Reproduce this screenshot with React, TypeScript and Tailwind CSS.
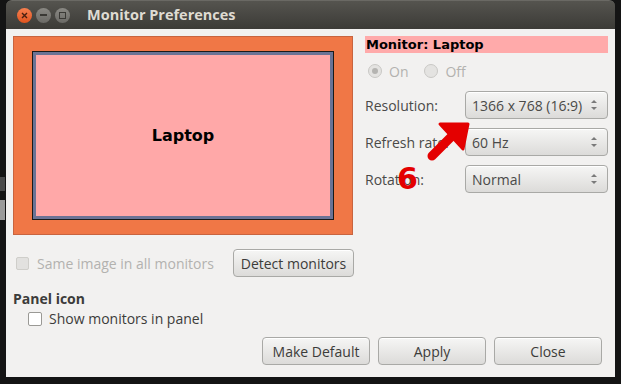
import React from 'react'

const font = { fontFamily: '"Open Sans", "DejaVu Sans", sans-serif' }

function Spinner() {
  return (
    <svg width="8" height="14" viewBox="0 0 8 14" className="shrink-0">
      <path d="M1 5 L4 2 L7 5 Z" fill="#7a7a7a" />
      <path d="M1 9 L4 12 L7 9 Z" fill="#7a7a7a" />
    </svg>
  )
}

function Combo({ value }: { value: string }) {
  return (
    <div className="h-[28px] w-[143px] flex items-center justify-between pl-[6px] pr-[9px] rounded-[4px] border border-[#a9a9a6] bg-gradient-to-b from-[#f6f6f5] to-[#dcdbd9] text-[14px] text-[#4a4a48] shadow-[inset_0_1px_0_#fff]">
      <span>{value}</span>
      <Spinner />
    </div>
  )
}

function Button({ label, className = '' }: { label: string; className?: string }) {
  return (
    <div
      className={`h-[28px] flex items-center justify-center rounded-[4px] border border-[#a9a9a6] bg-gradient-to-b from-[#f6f6f5] to-[#dcdbd9] text-[14px] text-[#3c3c3a] shadow-[inset_0_1px_0_#fff] ${className}`}
    >
      {label}
    </div>
  )
}

function Radio({ checked }: { checked?: boolean }) {
  return (
    <div className="w-[14px] h-[14px] rounded-full border border-[#c9c8c5] bg-[#e4e3e1] flex items-center justify-center">
      {checked && <div className="w-[6px] h-[6px] rounded-full bg-[#b5b4b1]" />}
    </div>
  )
}

export default function App() {
  return (
    <div className="w-[621px] h-[384px] bg-[#141414] relative overflow-hidden" style={font}>
      {/* desktop bits peeking out on the left */}
      <div className="absolute left-0 top-[177px] w-[5px] h-[14px] bg-[#4a4a4a]" />
      <div className="absolute left-0 top-[200px] w-[5px] h-[20px] bg-[#9a9a9a]" />

      <div className="ml-[6px] w-[609px] h-[377px] flex flex-col">
        {/* Title bar */}
        <div className="h-[29px] rounded-t-[6px] bg-gradient-to-b from-[#55544f] to-[#3c3b37] border-t border-[#6a6964] flex items-center pl-[11px]">
          <div className="flex items-center gap-[4px]">
            <div className="w-[15px] h-[15px] rounded-full bg-gradient-to-b from-[#f7804f] to-[#e0531c] flex items-center justify-center">
              <svg width="7" height="7" viewBox="0 0 7 7">
                <path d="M1 1 L6 6 M6 1 L1 6" stroke="#4a2010" strokeWidth="1.4" />
              </svg>
            </div>
            <div className="w-[15px] h-[15px] rounded-full bg-gradient-to-b from-[#8a8984] to-[#6b6a66] flex items-center justify-center">
              <div className="w-[7px] h-[1.5px] bg-[#3a3935]" />
            </div>
            <div className="w-[15px] h-[15px] rounded-full bg-gradient-to-b from-[#8a8984] to-[#6b6a66] flex items-center justify-center">
              <div className="w-[7px] h-[7px] border border-[#3a3935]" />
            </div>
          </div>
          <span className="ml-[17px] text-[14.5px] font-bold text-[#dfdbd2]">Monitor Preferences</span>
        </div>

        {/* Content */}
        <div className="flex-1 bg-[#f2f1f0] pl-[7px] pt-[7px] relative">
          <div className="flex gap-[12px]">
            {/* Display arrangement */}
            <div className="w-[340px] h-[199px] bg-[#f07746] border border-[#c8643f] flex items-center justify-center">
              <div className="w-[302px] h-[169px] border border-[#1a1a1a] bg-[#6b7395] p-[3px]">
                <div className="w-full h-full bg-[#ffa8a8] flex items-center justify-center">
                  <span className="text-[16px] font-bold text-black" style={{ fontFamily: '"DejaVu Sans", sans-serif' }}>
                    Laptop
                  </span>
                </div>
              </div>
            </div>

            {/* Monitor settings */}
            <div className="w-[243px] flex flex-col text-[14px] text-[#4a4a48]">
              <div className="h-[17px] bg-[#ffaaaa] flex items-center pl-[1px] text-[13px] font-bold text-black" style={{ fontFamily: '"DejaVu Sans", sans-serif' }}>
                Monitor: Laptop
              </div>
              <div className="h-[36px] flex items-center pl-[3px] text-[#b3b2af]">
                <Radio checked />
                <span className="ml-[7px]">On</span>
                <div className="ml-[16px]">
                  <Radio />
                </div>
                <span className="ml-[7px]">Off</span>
              </div>
              <div className="mt-[2px] flex flex-col gap-[9px]">
                <div className="flex items-center justify-between">
                  <span>Resolution:</span>
                  <Combo value="1366 x 768 (16:9)" />
                </div>
                <div className="flex items-center justify-between">
                  <span>Refresh rate:</span>
                  <Combo value="60 Hz" />
                </div>
                <div className="flex items-center justify-between">
                  <span>Rotation:</span>
                  <Combo value="Normal" />
                </div>
              </div>
            </div>
          </div>

          {/* Same image / detect */}
          <div className="mt-[14px] w-[340px] flex items-center justify-between">
            <div className="flex items-center pl-[3px]">
              <div className="w-[13px] h-[13px] rounded-[2px] border border-[#cfceca] bg-[#e2e1df]" />
              <span className="ml-[8px] text-[14px] text-[#b3b2af]">Same image in all monitors</span>
            </div>
            <Button label="Detect monitors" className="w-[121px] -mr-px" />
          </div>

          <div className="mt-[13px] text-[14px] font-bold text-[#3c3c3a] leading-[18px]">Panel icon</div>
          <div className="flex items-center pl-[15px]">
            <div className="w-[14px] h-[14px] rounded-[2px] border border-[#9a9995] bg-white" />
            <span className="ml-[7px] text-[14px] text-[#3c3c3a]">Show monitors in panel</span>
          </div>

          <div className="mt-[8px] flex justify-end gap-[8px] pr-[13px]">
            <Button label="Make Default" className="w-[108px]" />
            <Button label="Apply" className="w-[108px]" />
            <Button label="Close" className="w-[108px]" />
          </div>

          {/* red annotation */}
          <svg className="absolute left-0 top-0 pointer-events-none" width="609" height="348" viewBox="0 0 609 348">
            <g transform="translate(-6,-29)">
              <path d="M432 156 L454 134" stroke="#e40000" strokeWidth="9" strokeLinecap="round" />
              <path d="M440 124 L468 124 L463 149 Z" fill="#e40000" stroke="#e40000" strokeWidth="3" strokeLinejoin="round" />
            </g>
          </svg>
          <span
            className="absolute left-[391px] top-[135px] text-[30px] font-bold text-[#e40000] leading-none"
            style={{ fontFamily: '"DejaVu Sans", sans-serif' }}
          >
            6
          </span>
        </div>
      </div>
    </div>
  )
}
